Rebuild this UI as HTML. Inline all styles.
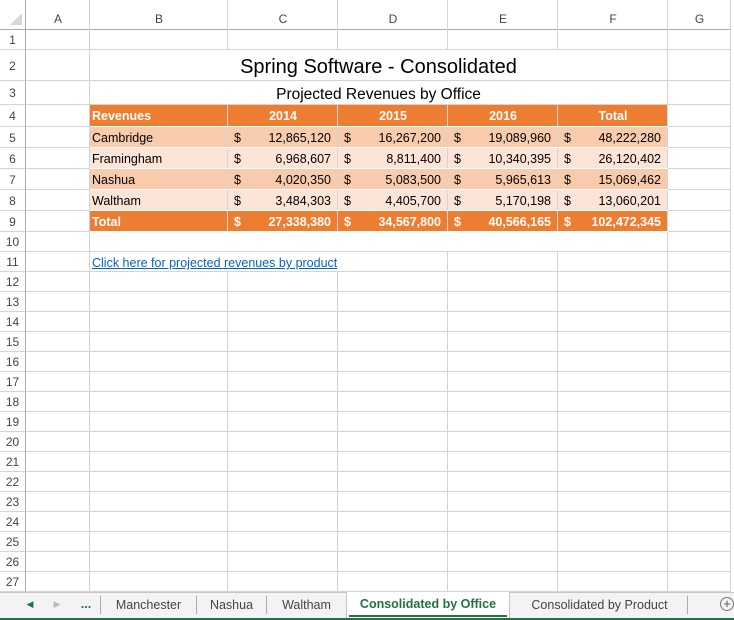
<!DOCTYPE html>
<html><head><meta charset="utf-8"><style>
*{margin:0;padding:0;box-sizing:border-box}
body{width:734px;height:620px;overflow:hidden;background:#fff;font-family:"Liberation Sans",sans-serif;position:relative}
.c{position:absolute;font-size:12.5px;color:#000;white-space:nowrap;overflow:visible}
.vl{position:absolute;width:1px;background:#d4d4d4}
.hl{position:absolute;height:1px;background:#d4d4d4}
.rh{position:absolute;left:0;width:25px;text-align:center;font-size:12px;color:#444}
.ch{position:absolute;top:0;height:29px;line-height:38px;text-align:center;font-size:12px;color:#444}
.f{position:absolute}
.tab{position:absolute;top:592px;height:25px;line-height:25px;font-size:12.5px;color:#444;text-align:center}
</style></head><body>
<div id="g"></div>
<script>
var cols=[0,26,90,228,338,448,558,668,731];
var rows=[30,50,81,105,127,148,169,190,211,232];
for(var i=10;i<=27;i++)rows.push(232+(i-9)*20);
var h='';
var fills=[[4,'#ED7D31'],[5,'#F8CBAD'],[6,'#FCE4D6'],[7,'#F8CBAD'],[8,'#FCE4D6'],[9,'#ED7D31']];
for(var r=0;r<rows.length;r++){h+='<div class="hl" style="left:0;width:731px;top:'+(rows[r]-1)+'px;'+(r==0?'background:#ababab':'')+'"></div>';}
for(var c=1;c<cols.length;c++){h+='<div class="vl" style="top:0;height:592px;left:'+(cols[c]-1)+'px;'+(c==1?'background:#ababab':'')+'"></div>';}
fills.forEach(function(f){var r=f[0];for(var c=2;c<7;c++){h+='<div class="f" style="background:'+f[1]+';left:'+cols[c]+'px;width:'+(cols[c+1]-cols[c]-1)+'px;top:'+rows[r-1]+'px;height:'+(rows[r]-rows[r-1]-1)+'px"></div>';}
h+='<div class="f" style="background:#fff;left:'+cols[2]+'px;width:'+(cols[7]-cols[2])+'px;top:'+(rows[r]-1)+'px;height:1px"></div>';});
h+='<div class="f" style="background:#fff;left:90px;width:577px;top:50px;height:30px"></div>';
h+='<div class="f" style="background:#fff;left:90px;width:577px;top:81px;height:23px"></div>';
h+='<div class="f" style="background:#fff;left:90px;width:577px;top:232px;height:19px"></div>';
h+='<div class="f" style="background:#fff;left:90px;width:300px;top:252px;height:19px"></div>';
var L=['A','B','C','D','E','F','G'];
for(var c=1;c<8;c++)h+='<div class="ch" style="left:'+cols[c]+'px;width:'+(cols[c+1]-cols[c])+'px">'+L[c-1]+'</div>';
h+='<div style="position:absolute;left:10px;top:13px;width:0;height:0;border-left:12px solid transparent;border-bottom:12px solid #d8d8d8"></div>';
for(var r=1;r<=27;r++){var t=rows[r-1],b=rows[r];h+='<div class="rh" style="top:'+t+'px;height:'+(b-t)+'px;line-height:'+(b-t+1)+'px">'+r+'</div>';}
function cell(r,c,txt,st){var t=rows[r-1],b=rows[r];h+='<div class="c" style="top:'+t+'px;height:'+(b-t)+'px;line-height:'+(b-t)+'px;'+st+'">'+txt+'</div>';}
cell(2,2,'Spring Software - Consolidated','left:90px;width:577px;text-align:center;font-size:20px;line-height:35px');
cell(3,2,'Projected Revenues by Office','left:90px;width:577px;text-align:center;font-size:15.5px;line-height:27px');
var W='color:#fff;font-weight:bold;';
cell(4,2,'Revenues',W+'left:92px');
['2014','2015','2016','Total'].forEach(function(y,i){cell(4,3+i,y,W+'left:'+cols[3+i]+'px;width:'+(cols[4+i]-cols[3+i])+'px;text-align:center');});
var data=[['Cambridge','12,865,120','16,267,200','19,089,960','48,222,280'],['Framingham','6,968,607','8,811,400','10,340,395','26,120,402'],['Nashua','4,020,350','5,083,500','5,965,613','15,069,462'],['Waltham','3,484,303','4,405,700','5,170,198','13,060,201'],['Total','27,338,380','34,567,800','40,566,165','102,472,345']];
data.forEach(function(d,i){var r=5+i;var s=(r==9)?W:'';s+='line-height:'+(rows[r]-rows[r-1]+2)+'px;';
cell(r,2,d[0],s+'left:92px');
for(var k=1;k<5;k++){var c=2+k;cell(r,c,'$',s+'left:'+(cols[c]+6)+'px');cell(r,c,d[k],s+'left:'+cols[c]+'px;width:'+(cols[c+1]-cols[c]-7)+'px;text-align:right');}
});
cell(11,2,'Click here for projected revenues by product','left:92px;color:#0563C1;text-decoration:underline;line-height:22px');
h+='<div class="f" style="left:0;top:592px;width:734px;height:28px;background:#f3f3f3;border-top:1px solid #c6c6c6"></div>';
h+='<div class="f" style="left:0;top:618px;width:734px;height:2px;background:#217346"></div>';
h+='<div class="tab" style="left:24px;width:12px;color:#217346;font-size:9px">&#9664;</div>';
h+='<div class="tab" style="left:52px;width:10px;color:#bbb;font-size:9px">&#9654;</div>';
h+='<div class="tab" style="left:76px;width:20px;color:#217346;font-weight:bold">...</div>';
var tabs=[[100,'Manchester',96],[196,'Nashua',70],[266,'Waltham',80]];
tabs.forEach(function(t){h+='<div class="tab" style="left:'+t[0]+'px;width:'+t[2]+'px;border-left:1px solid #ababab;height:18px;top:596px;line-height:18px">'+t[1]+'</div>';});
h+='<div class="tab" style="left:346px;width:164px;background:#fff;top:592px;height:26px;border-left:1px solid #c6c6c6;border-right:1px solid #c6c6c6;color:#217346;font-weight:bold;line-height:24px">Consolidated by Office<div style="position:absolute;left:2px;right:2px;bottom:1px;height:2px;background:#217346"></div></div>';
h+='<div class="tab" style="left:512px;width:176px;height:18px;top:596px;line-height:18px;border-right:1px solid #ababab">Consolidated by Product</div>';
h+='<div class="f" style="left:720px;top:597px;width:14px;height:14px;border:1px solid #777;border-radius:50%;font-size:13px;line-height:11px;text-align:center;color:#555">+</div>';
document.getElementById('g').innerHTML=h;
</script>
</body></html>
